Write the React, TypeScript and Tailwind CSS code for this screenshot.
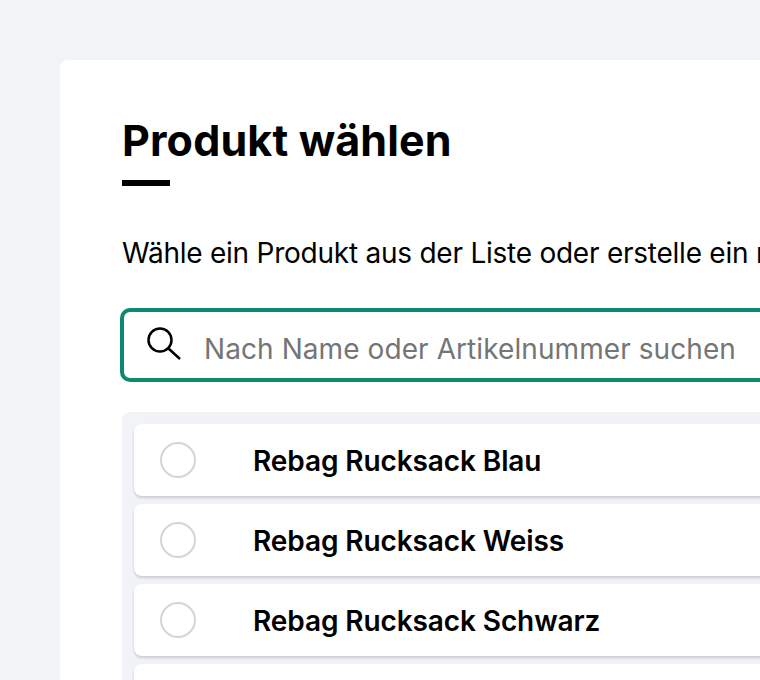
const products = ["Rebag Rucksack Blau", "Rebag Rucksack Weiss", "Rebag Rucksack Schwarz", "Rebag Rucksack Grün"];

function ProductRow({ name }: { name: string }) {
  return (
    <div className="flex h-[72px] shrink-0 items-center rounded-lg bg-white pl-[26px] shadow-[0_2px_3px_rgba(0,0,0,0.16)]">
      <span className="h-9 w-9 shrink-0 rounded-full border-2 border-[#d3d5d9] bg-white" />
      <span className="ml-[57px] pt-[2px] text-[28px] font-semibold leading-none tracking-[-0.1px] text-black">{name}</span>
    </div>
  );
}

export default function App() {
  return (
    <div className="h-[680px] w-[760px] overflow-hidden bg-[#f2f3f7] pl-[60px] pt-[60px] font-['Inter',sans-serif]">
      <div className="h-[900px] w-[1000px] rounded-lg bg-white pl-[62px] pt-[54px]">
        <h1 className="text-[43px] font-bold leading-[52px] tracking-[0.15px] text-black">Produkt wählen</h1>
        <div className="mt-[14px] h-[6px] w-12 bg-black" />
        <p className="mt-[49px] whitespace-nowrap text-[28px] leading-[36px] tracking-[-0.24px] text-black">
          Wähle ein Produkt aus der Liste oder erstelle ein neues Produkt.
        </p>
        <div className="-ml-[2px] mt-[37px] flex h-[74px] w-[900px] items-center rounded-[10px] border-4 border-[#0b8a6f] pl-[22px]">
          <svg width="36" height="36" viewBox="0 0 36 36" fill="none" stroke="black" strokeWidth="2.5" className="shrink-0">
            <circle cx="14" cy="13" r="11.5" />
            <path d="M22.5 21.5 L34 32" />
          </svg>
          <span className="ml-[22px] whitespace-nowrap pt-2 text-[28px] leading-none tracking-[0.08px] text-[#757575]">
            Nach Name oder Artikelnummer suchen
          </span>
        </div>
        <div className="mt-[30px] flex w-[900px] flex-col gap-2 rounded-lg bg-[#f2f3f7] p-3">
          {products.map((name) => (
            <ProductRow key={name} name={name} />
          ))}
        </div>
      </div>
    </div>
  );
}
